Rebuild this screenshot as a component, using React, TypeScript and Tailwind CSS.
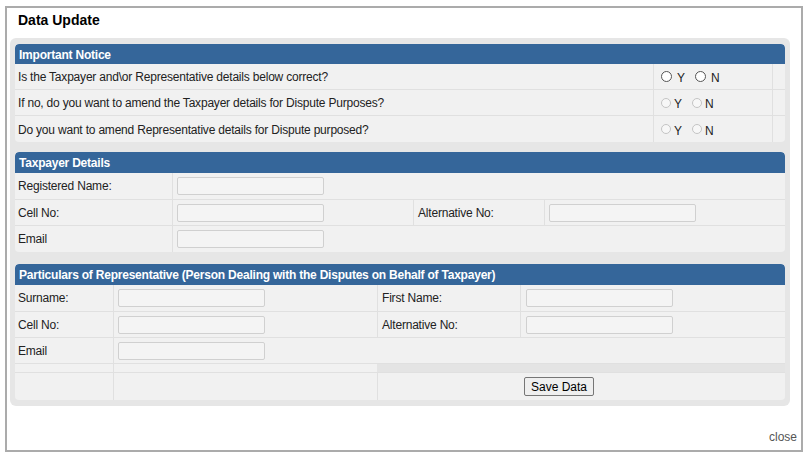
import type { ReactNode } from 'react'

const FONT = { fontFamily: '"Liberation Sans", Arial, sans-serif' }

function Header({ children, h = 'h-[20px]' }: { children: ReactNode; h?: string }) {
  return (
    <div
      className={`${h} flex items-center rounded-t-[4px] bg-[#35669a] px-[4px] pt-[1px] text-[12px] font-bold tracking-[-0.22px] text-white`}
    >
      {children}
    </div>
  )
}

function Field() {
  return (
    <input
      type="text"
      className="h-[18px] w-[147px] rounded-[2px] border border-[#d0d0d0] bg-[#f4f4f4] outline-none"
    />
  )
}

function Radio({ enabled, label }: { enabled: boolean; label: string }) {
  return (
    <span className="flex items-center">
      <span
        className={
          enabled
            ? 'h-[11px] w-[11px] rounded-full border border-[#555] bg-white'
            : 'h-[10px] w-[10px] rounded-full border border-[#c4c4c4] bg-[#f7f7f7]'
        }
      />
      <span className={enabled ? 'ml-[5px] mt-[2px] text-[12px] text-[#222]' : 'ml-[3px] mt-[3px] text-[12px] text-[#222]'}>
        {label}
      </span>
    </span>
  )
}

function QuestionRow({ text, enabled, last }: { text: string; enabled: boolean; last?: boolean }) {
  return (
    <div className={`flex h-[26px] ${last ? '' : 'border-b border-[#e0e0e0]'}`}>
      <div className="flex w-[638px] items-center px-[3px] pt-[1px] text-[12px] tracking-[-0.2px] text-[#222]">{text}</div>
      <div className="flex w-[119px] items-center gap-[10px] border-l border-[#e0e0e0] pl-[7px]">
        <Radio enabled={enabled} label="Y" />
        <Radio enabled={enabled} label="N" />
      </div>
      <div className="flex-1 border-l border-[#e0e0e0]" />
    </div>
  )
}

function Cell({ w, children, pad = 'pl-[3px]', left }: { w: string; children?: ReactNode; pad?: string; left?: boolean }) {
  return (
    <div
      className={`flex ${w} items-center ${pad} text-[12px] tracking-[-0.2px] text-[#222] ${left ? 'border-l border-[#e0e0e0]' : ''}`}
    >
      {children}
    </div>
  )
}

export default function App() {
  return (
    <div className="h-[455px] w-[808px] bg-white pl-[5px] pt-[6px]" style={FONT}>
      <div className="flex h-[446px] w-[798px] flex-col border-2 border-[#ababab]">
        <div className="h-[30px] px-[11px] pt-[2px] text-[14px] font-bold text-black">Data Update</div>

        <div className="ml-[3px] flex w-[780px] flex-col rounded-[6px] bg-[#e6e6e6] px-[5px] pb-[6px] pt-[6px]">
          {/* Important Notice */}
          <div className="overflow-hidden rounded-[4px] bg-[#f1f1f1]">
            <Header>Important Notice</Header>
            <QuestionRow text="Is the Taxpayer and\or Representative details below correct?" enabled />
            <QuestionRow text="If no, do you want to amend the Taxpayer details for Dispute Purposes?" enabled={false} />
            <QuestionRow text="Do you want to amend Representative details for Dispute purposed?" enabled={false} last />
          </div>

          {/* Taxpayer Details */}
          <div className="mt-[10px] overflow-hidden rounded-[4px] bg-[#f1f1f1]">
            <Header h="h-[21px]">Taxpayer Details</Header>
            <div className="flex h-[27px] border-b border-[#e0e0e0]">
              <Cell w="w-[157px]">Registered Name:</Cell>
              <Cell w="w-[241px]" pad="pl-[4px]" left>
                <Field />
              </Cell>
              <div className="flex-1" />
            </div>
            <div className="flex h-[26px] border-b border-[#e0e0e0]">
              <Cell w="w-[157px]">Cell No:</Cell>
              <Cell w="w-[241px]" pad="pl-[4px]" left>
                <Field />
              </Cell>
              <Cell w="w-[131px]" pad="pl-[4px]" left>
                Alternative No:
              </Cell>
              <Cell w="flex-1" pad="pl-[4px]" left>
                <Field />
              </Cell>
            </div>
            <div className="flex h-[26px]">
              <Cell w="w-[157px]">Email</Cell>
              <Cell w="w-[241px]" pad="pl-[4px]" left>
                <Field />
              </Cell>
              <div className="flex-1" />
            </div>
          </div>

          {/* Representative */}
          <div className="mt-[12px] overflow-hidden rounded-[4px] bg-[#f1f1f1]">
            <Header h="h-[21px]">
              Particulars of Representative (Person Dealing with the Disputes on Behalf of Taxpayer)
            </Header>
            <div className="flex h-[27px] border-b border-[#e0e0e0]">
              <Cell w="w-[98px]">Surname:</Cell>
              <Cell w="w-[264px]" pad="pl-[4px]" left>
                <Field />
              </Cell>
              <Cell w="w-[143px]" pad="pl-[4px]" left>
                First Name:
              </Cell>
              <Cell w="flex-1" pad="pl-[5px]" left>
                <Field />
              </Cell>
            </div>
            <div className="flex h-[26px] border-b border-[#e0e0e0]">
              <Cell w="w-[98px]">Cell No:</Cell>
              <Cell w="w-[264px]" pad="pl-[4px]" left>
                <Field />
              </Cell>
              <Cell w="w-[143px]" pad="pl-[4px]" left>
                Alternative No:
              </Cell>
              <Cell w="flex-1" pad="pl-[5px]" left>
                <Field />
              </Cell>
            </div>
            <div className="flex h-[26px] border-b border-[#e0e0e0]">
              <Cell w="w-[98px]">Email</Cell>
              <Cell w="w-[264px]" pad="pl-[4px]" left>
                <Field />
              </Cell>
              <div className="flex-1" />
            </div>
            <div className="flex h-[9px] border-b border-[#e0e0e0]">
              <div className="w-[98px]" />
              <div className="w-[264px] border-l border-[#e0e0e0]" />
              <div className="flex-1 bg-[#e4e4e4]" />
            </div>
            <div className="flex h-[27px]">
              <div className="w-[98px]" />
              <div className="w-[264px] border-l border-[#e0e0e0]" />
              <div className="w-[143px] border-l border-[#e0e0e0]" />
              <div className="flex flex-1 items-center pl-[4px]">
                <button
                  type="button"
                  className="h-[19px] rounded-[2px] border border-[#767676] bg-[#efefef] px-[6px] text-[12px] leading-none text-black"
                >
                  Save Data
                </button>
              </div>
            </div>
          </div>
        </div>

        <div className="flex flex-1 items-end justify-end pb-[4px] pr-[4px] text-[12px] text-[#555]">close</div>
      </div>
    </div>
  )
}
